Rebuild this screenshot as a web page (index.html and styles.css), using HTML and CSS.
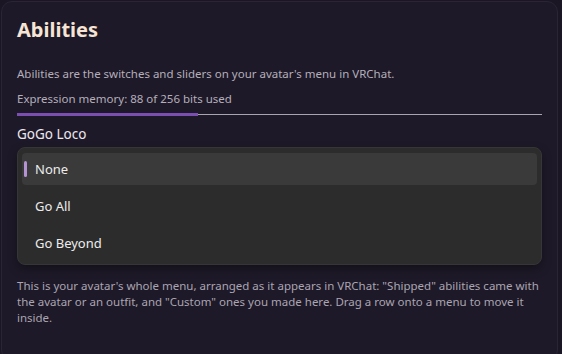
FILE: index.html
```html
<!DOCTYPE html>
<html>
<head>
<meta charset="utf-8">
<link rel="stylesheet" href="styles.css">
</head>
<body>
<div class="card">
  <h1 class="title">Abilities</h1>
  <p class="desc">Abilities are the switches and sliders on your avatar's menu in VRChat.</p>
  <p class="memory">Expression memory: 88 of 256 bits used</p>
  <div class="progress"><div class="fill" style="width:34.4%"></div></div>
  <div class="label">GoGo Loco</div>
  <div class="dropdown">
    <div class="item selected"><span class="mark"></span>None</div>
    <div class="item">Go All</div>
    <div class="item">Go Beyond</div>
  </div>
  <p class="note">This is your avatar's whole menu, arranged as it appears in VRChat: "Shipped" abilities came with the avatar or an outfit, and "Custom" ones you made here. Drag a row onto a menu to move it inside.</p>
</div>
</body>
</html>
```
FILE: styles.css
```css
html, body {
  margin: 0;
  padding: 0;
  background: #1a1624;
  height: 100%;
  overflow: hidden;
}
body {
  padding: 1px 4px 0 1px;
  font-family: "Noto Sans", "Open Sans", sans-serif;
}
.card {
  background: #1e1928;
  border: 1px solid #2a2436;
  border-radius: 11px;
  padding: 14px 15px 0 15px;
  height: 360px;
  box-sizing: border-box;
}
.title {
  margin: 0;
  font-size: 20px;
  line-height: 28px;
  font-weight: 700;
  color: #f6e4d4;
}
.desc {
  margin: 22px 0 0;
  font-size: 11.5px;
  line-height: 16px;
  color: #b4afbb;
}
.memory {
  margin: 9px 0 0;
  font-size: 11.5px;
  line-height: 16px;
  color: #b4afbb;
}
.progress {
  margin-top: 7px;
  height: 1px;
  background: #a9a4ae;
  position: relative;
}
.fill {
  position: absolute;
  left: 0;
  top: -1px;
  height: 3px;
  background: #7a4fb1;
}
.label {
  margin-top: 10px;
  font-size: 13.5px;
  line-height: 18px;
  font-weight: 400;
  color: #ece7ef;
}
.dropdown {
  margin-top: 4px;
  background: #2c2c2c;
  border: 1px solid #363636;
  border-radius: 8px;
  padding: 5px 4px 5px 4px;
  box-shadow: 0 4px 10px rgba(0,0,0,0.35);
}
.item {
  position: relative;
  height: 32px;
  margin-bottom: 5px;
  border-radius: 4px;
  padding-left: 13px;
  display: flex;
  align-items: center;
  font-size: 13px;
  color: #ececec;
}
.item:last-child { margin-bottom: 0; }
.item.selected { background: #3a3a3a; }
.mark {
  position: absolute;
  left: 2px;
  top: 8px;
  width: 3px;
  height: 16px;
  border-radius: 2px;
  background: #b592d2;
}
.note {
  margin: 13px 0 0;
  font-size: 11.5px;
  line-height: 16px;
  color: #aaa5b2;
}
```
